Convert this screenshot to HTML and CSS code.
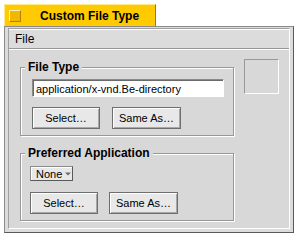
FILE: index.html
```html
<!DOCTYPE html>
<html lang="en">
<head>
    <meta charset="UTF-8">
    <title>Custom File Type</title>
    <link rel="stylesheet" href="styles.css">
</head>
<body>
    <div class="window">
        <!-- Title Tab -->
        <div class="tab">
            <span class="close-box"></span>
            <span class="tab-title">Custom File Type</span>
        </div>

        <div class="frame">
            <div class="inner">
                <!-- Menu Bar -->
                <div class="menubar">
                    <span class="menu-item">File</span>
                </div>

                <div class="content">
                    <div class="column">
                        <!-- File Type Group -->
                        <div class="group group-type">
                            <div class="group-title">File Type</div>
                            <div class="text-field">application/x-vnd.Be-directory</div>
                            <div class="button-row">
                                <button class="btn btn-select">Select…</button>
                                <button class="btn btn-same">Same As…</button>
                            </div>
                        </div>

                        <!-- Preferred Application Group -->
                        <div class="group group-app">
                            <div class="group-title">Preferred Application</div>
                            <button class="popup">None
                                <svg width="6" height="4" viewBox="0 0 6 4"><path d="M0 0.5h6L3 3.5z" fill="#6a6a6a"/></svg>
                            </button>
                            <div class="button-row">
                                <button class="btn btn-select">Select…</button>
                                <button class="btn btn-same">Same As…</button>
                            </div>
                        </div>
                    </div>

                    <!-- Icon Well -->
                    <div class="icon-well"></div>
                </div>
            </div>
        </div>
    </div>
</body>
</html>
```

FILE: styles.css
```css
/* General Styles */
body {
    margin: 0;
    background: #fff;
    font-family: 'Liberation Sans', Arial, sans-serif;
    font-size: 12px;
    color: #000;
}

.window {
    margin: 4px 0 0 4px;
    width: 290px;
}

/* Title Tab */
.tab {
    width: 152px;
    height: 22px;
    box-sizing: border-box;
    background: #ffcb00;
    border-top: 1px solid #ffe88a;
    border-left: 1px solid #ffe88a;
    border-right: 1px solid #9a7a00;
    display: flex;
    align-items: center;
    padding-left: 4px;
}

.close-box {
    width: 12px;
    height: 12px;
    box-sizing: border-box;
    background: #f2b800;
    border: 1px solid;
    border-color: #fff3b8 #a98400 #a98400 #fff3b8;
    margin-top: 1px;
}

.tab-title {
    font-weight: bold;
    font-size: 12px;
    margin-left: 19px;
    margin-top: 1px;
}

/* Window Frame */
.frame {
    width: 290px;
    height: 207px;
    box-sizing: border-box;
    background: #dcdcdc;
    border: 1px solid #8a8a8a;
    border-right-color: #5a5a5a;
    border-bottom-color: #5a5a5a;
    padding: 1px 3px 3px 3px;
}

.inner {
    height: 100%;
    box-sizing: border-box;
    background: #d8d8d8;
    border: 1px solid #a0a0a0;
    border-right-color: #fff;
    border-bottom-color: #fff;
}

/* Menu Bar */
.menubar {
    height: 20px;
    box-sizing: border-box;
    background: #dcdcdc;
    border-top: 1px solid #fff;
    border-bottom: 1px solid #989898;
    display: flex;
    align-items: center;
    padding-left: 6px;
}

.menu-item {
    font-size: 12px;
}

/* Content */
.content {
    display: flex;
    padding: 9px 0 0 11px;
    border-top: 1px solid #fff;
}

.column {
    width: 214px;
}

/* Groups */
.group {
    border: 1px solid #989898;
    box-shadow: 1px 1px 0 #fff, inset 1px 1px 0 #fff;
    margin-top: 8px;
    padding: 0 9px 6px 11px;
}

.group-app {
    margin-top: 17px;
    padding-left: 9px;
}

.group-title {
    width: fit-content;
    margin: -8px 0 0 -7px;
    padding: 0 3px;
    background: #d8d8d8;
    font-weight: bold;
    font-size: 12px;
    line-height: 14px;
}

.group-app .group-title {
    margin-left: -5px;
}

/* Text Field */
.text-field {
    margin-top: 5px;
    height: 18px;
    box-sizing: border-box;
    background: #fff;
    border: 1px solid;
    border-color: #8a8a8a #fff #fff #8a8a8a;
    box-shadow: inset 1px 1px 0 #6a6a6a;
    padding: 2px 0 0 3px;
    line-height: 14px;
    font-size: 11px;
    white-space: nowrap;
}

/* Buttons */
.button-row {
    display: flex;
    gap: 12px;
    margin-top: 10px;
}

.group-app .button-row {
    margin-top: 11px;
    gap: 11px;
}

.btn {
    height: 22px;
    box-sizing: border-box;
    background: #e8e8e8;
    border: 1px solid #6e6e6e;
    box-shadow: inset 1px 1px 0 #fff, inset -1px -1px 0 #a8a8a8;
    font-family: 'Liberation Sans', Arial, sans-serif;
    font-size: 11px;
    color: #000;
    padding: 0;
}

.btn-select {
    width: 68px;
}

.btn-same {
    width: 69px;
}

.popup {
    margin-top: 6px;
    height: 15px;
    width: 43px;
    box-sizing: border-box;
    background: #e8e8e8;
    border: 1px solid #8a8a8a;
    border-right-color: #5a5a5a;
    border-bottom-color: #5a5a5a;
    box-shadow: inset 1px 1px 0 #fff;
    font-family: 'Liberation Sans', Arial, sans-serif;
    font-size: 11px;
    color: #000;
    padding: 0 0 0 5px;
    display: flex;
    align-items: center;
    gap: 3px;
}

/* Icon Well */
.icon-well {
    width: 35px;
    height: 35px;
    box-sizing: border-box;
    margin: 0 0 0 10px;
    border: 1px solid;
    border-color: #989898 #fff #fff #989898;
}
```
